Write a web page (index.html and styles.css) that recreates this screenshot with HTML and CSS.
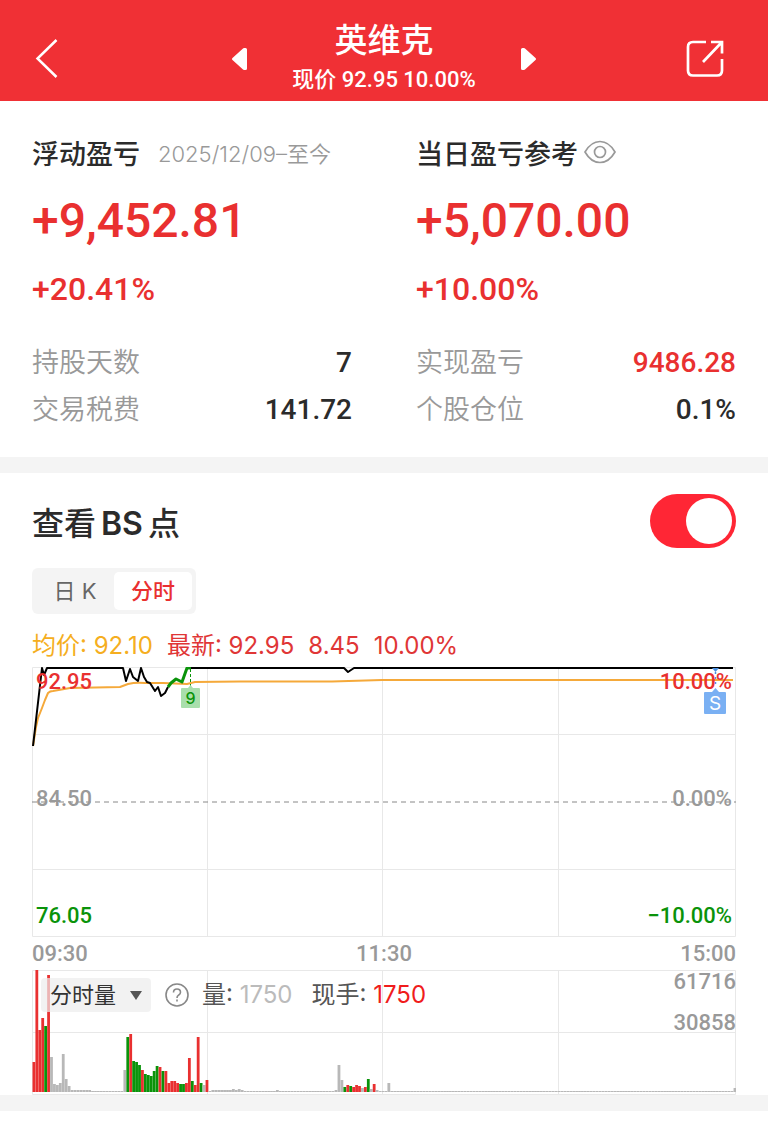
FILE: index.html
```html
<!DOCTYPE html>
<html lang="zh-CN">
<head>
    <meta charset="UTF-8">
    <meta name="viewport" content="width=device-width, initial-scale=1.0">
    <title>英维克</title>
    <link rel="stylesheet" href="styles.css">
</head>
<body>
    <header class="topbar">
        <button class="icon-btn back" aria-label="返回">
            <svg width="24" height="42" viewBox="0 0 24 42"><path d="M22.500 3L3.500 21.500L22.500 40" fill="none" stroke="#fff" stroke-width="2.500"/></svg>
        </button>
        <div class="stock">
            <button class="icon-btn" aria-label="上一只">
                <svg width="17" height="24" viewBox="0 0 17 24"><path d="M13 3.500L2.500 13L13 22.500H14.500V3.500Z" fill="#fff" stroke="#fff" stroke-width="3" stroke-linejoin="round"/></svg>
            </button>
            <div class="stock-text">
                <h1>英维克</h1>
                <p>现价 92.95 10.00%</p>
            </div>
            <button class="icon-btn" aria-label="下一只">
                <svg width="17" height="24" viewBox="0 0 17 24"><path d="M4 3.500L14.500 13L4 22.500H2.500V3.500Z" fill="#fff" stroke="#fff" stroke-width="3" stroke-linejoin="round"/></svg>
            </button>
        </div>
        <button class="icon-btn share" aria-label="分享">
            <svg width="38" height="38" viewBox="0 0 38 38" fill="none" stroke="#fff" stroke-width="2.700">
                <path d="M20 3H7Q2 3 2 8V31.500Q2 36.500 7 36.500H31Q36 36.500 36 31.500V20"/>
                <path d="M25 3H36V14.500M35.500 3.500L17 23"/>
            </svg>
        </button>
    </header>

    <section class="profit">
        <div class="profit-col">
            <div class="profit-title"><h2>浮动盈亏</h2><span class="period">2025/12/09–至今</span></div>
            <p class="amount">+9,452.81</p>
            <p class="rate">+20.41%</p>
            <dl>
                <div><dt>持股天数</dt><dd>7</dd></div>
                <div><dt>交易税费</dt><dd>141.72</dd></div>
            </dl>
        </div>
        <div class="profit-col">
            <div class="profit-title">
                <h2>当日盈亏参考</h2>
                <button class="icon-btn eye" aria-label="隐藏金额">
                    <svg width="32" height="24" viewBox="0 0 32 24" fill="none" stroke="#999" stroke-width="1.700">
                        <path d="M1 12Q7 1.500 16 1.500T31 12Q25 22.500 16 22.500T1 12Z"/>
                        <circle cx="16" cy="12" r="5.500"/>
                    </svg>
                </button>
            </div>
            <p class="amount">+5,070.00</p>
            <p class="rate">+10.00%</p>
            <dl>
                <div><dt>实现盈亏</dt><dd class="red">9486.28</dd></div>
                <div><dt>个股仓位</dt><dd>0.1%</dd></div>
            </dl>
        </div>
    </section>

    <section class="trade">
        <div class="trade-head">
            <label for="bs">查看<span class="bs">BS</span>点</label>
            <input type="checkbox" id="bs" class="switch" checked>
        </div>

        <div class="tabs">
            <button>日 K</button>
            <button class="active">分时</button>
        </div>

        <div class="legend">
            <span class="avg">均价: 92.10</span>
            <span>最新: 92.95</span>
            <span>8.45</span>
            <span>10.00%</span>
        </div>

        <div class="chart">
            <svg viewBox="0 0 704 270">
                <path class="grid" d="M.5 .5H703.500V269.500H.5ZM175.500 0V270M350.500 0V270M526.500 0V270M0 67.500H704M0 202.500H704"/>
                <path class="zero" d="M0 135H704"/>
                <path class="line avg-line" d="M1 79L4 60L6 51L10 41L13 33L16 26Q18 24 21 24L38 21L88 20L96 17Q104 15 113 16L131 16L155 17L163 15L208 14.500L300 14.500L350 13H701"/>
                <path class="line price-line" d="M1 79L10 1L12 8L15 1H91L94 14L98 2L101 10L106 14L109 1L112 10L115 15L118 16L123 24L126 20L129 29L133 26L136 20M159 1H312L316 5L322 1H701"/>
                <path class="line buy-line" d="M136 20L139 16L144 12L150 15L155 1H159"/>
                <path d="M158.500 2V20" stroke="#0a930a" stroke-dasharray="3 2"/>
                <path d="M150 21H156L158.500 18L161 21H167Q168 21 168 22V40Q168 41 167 41H150Q149 41 149 40V22Q149 21 150 21Z" fill="#a9dfac"/>
                <text x="158.500" y="37" class="mark mark-nine">9</text>
                <path d="M680 1H687L683.500 5Z" fill="#4a8fe0"/>
                <path d="M683.500 5V20" stroke="#4a8fe0" stroke-width="1.500" stroke-dasharray="2 3"/>
                <path d="M673 25H680L683.500 21L687 25H693Q694 25 694 26V46Q694 47 693 47H673Q672 47 672 46V26Q672 25 673 25Z" fill="#7ab0f3"/>
                <text x="683" y="43" class="mark mark-sell">S</text>
            </svg>
            <div class="scale">
                <span class="red">92.95</span><span>84.50</span><span class="green">76.05</span>
            </div>
            <div class="scale scale-right">
                <span class="red">10.00%</span><span>0.00%</span><span class="green">−10.00%</span>
            </div>
        </div>

        <div class="times"><span>09:30</span><span>11:30</span><span>15:00</span></div>

        <div class="chart">
            <svg viewBox="0 0 704 125">
                <path class="grid" d="M.5 .5H703.500V124.500H.5ZM175.500 0V125M350.500 0V125M526.500 0V125M0 62.500H704"/>
                <g id="bars"></g>
            </svg>
            <div class="volume-bar">
                <div class="picker">
                    <select aria-label="指标"><option>分时量</option></select>
                    <svg width="12" height="9" viewBox="0 0 12 9"><path d="M0 0H12L6 9Z" fill="#555"/></svg>
                </div>
                <button class="icon-btn" aria-label="说明">
                    <svg width="24" height="24" viewBox="0 0 24 24" fill="none" stroke="#888" stroke-width="1.600">
                        <circle cx="12" cy="12" r="11"/>
                        <path d="M8.500 9.500Q8.500 6 12 6T15.500 9.300Q15.500 11 13.500 12.200Q12 13.200 12 15M12 16.500V18.500"/>
                    </svg>
                </button>
                <span class="vol">量: <span class="muted">1750</span></span>
                <span>现手: <span class="hot">1750</span></span>
            </div>
            <div class="volume-scale"><span>61716</span><span>30858</span></div>
        </div>
    </section>

    <script>
        const colors = { r: '#e93030', g: '#0a930a', n: '#b8b8b8' };
        // [分钟, 高度, 颜色]
        const volumes = [
            [0, 30, 'r'], [1, 122, 'r'], [2, 62, 'r'], [3, 74, 'r'], [4, 66, 'g'], [5, 117, 'r'],
            [6, 35, 'n'], [7, 8, 'n'], [8, 7, 'n'], [9, 9, 'n'], [10, 38, 'n'], [11, 13, 'n'], [12, 6, 'n'],
            [31, 22, 'n'], [32, 55, 'g'], [33, 58, 'r'], [34, 31, 'g'], [35, 30, 'g'], [36, 27, 'g'],
            [37, 22, 'r'], [38, 18, 'g'], [39, 17, 'g'], [40, 16, 'g'], [41, 21, 'g'], [42, 26, 'g'],
            [43, 25, 'r'], [44, 21, 'g'], [45, 21, 'r'], [46, 9, 'r'], [47, 11, 'r'], [48, 11, 'r'],
            [49, 9, 'r'], [50, 8, 'g'], [51, 8, 'g'], [52, 9, 'r'], [53, 34, 'r'], [54, 11, 'g'],
            [55, 7, 'r'], [56, 55, 'r'], [57, 9, 'g'], [58, 7, 'n'], [59, 12, 'r'],
            [68, 3, 'n'], [70, 3, 'n'], [83, 2, 'n'], [103, 2, 'n'],
            [104, 27, 'n'], [105, 12, 'n'], [106, 5, 'g'], [107, 7, 'r'], [108, 6, 'g'], [109, 5, 'r'],
            [110, 7, 'r'], [111, 6, 'r'], [112, 4, 'n'], [113, 5, 'r'], [114, 13, 'g'], [115, 3, 'n'],
            [116, 8, 'r'], [117, 2, 'n'], [121, 9, 'n'], [239, 4, 'n']
        ];
        const step = 704 / 240;
        const drawn = new Set(volumes.map(v => v[0]));
        for (let i = 13; i < 239; i++) {
            if (!drawn.has(i)) volumes.push([i, i < 20 || (i > 60 && i < 72) ? 2 : 1, 'n']);
        }
        document.getElementById('bars').innerHTML = volumes.map(([i, h, c]) =>
            `<rect x="${i * step + 0.5}" y="${122 - h}" width="2.800" height="${h}" fill="${colors[c]}"/>`
        ).join('');
    </script>
</body>
</html>
```
FILE: styles.css
```css
* {
    margin: 0;
    padding: 0;
    box-sizing: border-box;
}

body {
    font-family: Inter, 'Noto Sans CJK SC', sans-serif;
    background: #fff;
    color: #2b2b2b;
}

button, select {
    font: inherit;
    color: inherit;
    border: none;
    background: none;
    cursor: pointer;
}

svg {
    display: block;
}

.topbar {
    display: grid;
    grid-template-columns: 1fr auto 1fr;
    align-items: center;
    padding: 19px 34px 4px;
    background: #f03035;
    color: #fff;
}

.share {
    justify-self: end;
    margin-right: 10px;
}

.back {
    justify-self: start;
}

.stock {
    display: flex;
    align-items: center;
    gap: 44px;
}

.stock-text {
    text-align: center;
    font-family: Roboto, 'Noto Sans CJK SC', sans-serif;
    font-weight: 500;
}

.stock-text h1 {
    font-size: 33px;
    line-height: 44px;
    font-weight: 500;
}

.stock-text p {
    font-size: 22px;
    line-height: 34px;
}

.profit {
    display: grid;
    grid-template-columns: 1fr 1fr;
    gap: 64px;
    padding: 31px 32px 24px;
    border-bottom: 16px solid #f4f4f4;
}

.profit-title {
    display: flex;
    align-items: center;
    height: 40px;
    margin-bottom: 21px;
    white-space: nowrap;
}

.profit-title h2 {
    font-size: 27px;
    font-weight: 500;
}

.period {
    margin-left: 18px;
    font-size: 22px;
    font-weight: 350;
    color: #999;
}

.eye {
    margin-left: 6px;
}

.amount, .rate, dd {
    font-family: Roboto, sans-serif;
    font-weight: 500;
}

.amount, .rate {
    color: #e93030;
}

.amount {
    font-size: 48px;
    line-height: 56px;
}

.rate {
    margin-top: 20px;
    font-size: 32px;
    line-height: 40px;
}

dl {
    margin-top: 30px;
}

dl div {
    display: flex;
    justify-content: space-between;
    line-height: 47px;
}

dt {
    font-size: 27px;
    font-weight: 350;
    color: #999;
}

dd {
    font-size: 28px;
}

.red {
    color: #e93030;
}

.green {
    color: #0a930a;
}

.trade {
    padding: 20px 32px 0;
    border-bottom: 16px solid #f4f4f4;
}

.trade-head {
    display: flex;
    justify-content: space-between;
    align-items: center;
    height: 56px;
    font-size: 32px;
    font-weight: 500;
}

.bs {
    margin: 0 5px;
    font-weight: 600;
}

.switch {
    appearance: none;
    width: 86px;
    height: 54px;
    padding: 4px;
    border-radius: 27px;
    background: #ccc;
    cursor: pointer;
}

.switch::before {
    content: '';
    display: block;
    width: 46px;
    height: 46px;
    border-radius: 50%;
    background: #fff;
}

.switch:checked {
    background: #ff2635;
}

.switch:checked::before {
    margin-left: auto;
}

.tabs {
    display: inline-flex;
    margin-top: 19px;
    padding: 4px;
    border-radius: 6px;
    background: #f4f4f4;
}

.tabs button {
    width: 78px;
    height: 38px;
    border-radius: 5px;
    font-size: 22px;
    line-height: 38px;
    color: #666;
}

.tabs .active {
    background: #fff;
    color: #e93030;
    font-weight: 500;
}

.legend {
    display: flex;
    gap: 14px;
    margin: 16px 0 5px;
    font-size: 24px;
    line-height: 32px;
    color: #e03636;
}

.legend .avg {
    color: #f5ae20;
}

.chart {
    position: relative;
}

.chart > svg {
    width: 100%;
}

.grid {
    fill: none;
    stroke: #e8e8e8;
}

.zero {
    stroke: #888;
    stroke-dasharray: 5 4;
}

.line {
    fill: none;
    stroke-width: 2;
    stroke-linejoin: round;
}

.avg-line {
    stroke: #f5a93a;
}

.price-line {
    stroke: #000;
}

.buy-line {
    stroke: #0a930a;
    stroke-width: 3;
}

.mark {
    text-anchor: middle;
    font-size: 16px;
}

.mark-nine {
    fill: #0a930a;
    font-weight: 500;
}

.mark-sell {
    fill: #fff;
    font-size: 19px;
}

.scale, .times, .volume-scale {
    font-family: Roboto, sans-serif;
    font-size: 22px;
    font-weight: 500;
    color: #999;
}

.scale {
    position: absolute;
    top: 1px;
    bottom: 7px;
    left: 4px;
    display: flex;
    flex-direction: column;
    justify-content: space-between;
    line-height: 28px;
}

.scale-right {
    left: auto;
    right: 4px;
    text-align: right;
}

.times {
    display: flex;
    justify-content: space-between;
    line-height: 33px;
}

.volume-bar {
    position: absolute;
    top: 8px;
    left: 9px;
    display: flex;
    align-items: center;
    font-size: 24px;
    line-height: 34px;
    color: #555;
}

.picker {
    position: relative;
    margin-right: 14px;
    border-radius: 4px;
    background: rgba(236, 236, 236, 0.7);
}

.picker select {
    display: block;
    appearance: none;
    width: 110px;
    height: 34px;
    padding-left: 9px;
    font-size: 22px;
    color: #333;
}

.picker svg {
    position: absolute;
    right: 9px;
    top: 13px;
    pointer-events: none;
}

.vol {
    margin: 0 19px 0 13px;
}

.muted {
    color: #bbb;
}

.hot {
    color: #f01c1c;
}

.volume-scale {
    position: absolute;
    top: 0;
    right: 0;
    display: flex;
    flex-direction: column;
    gap: 17px;
    line-height: 24px;
}
```
